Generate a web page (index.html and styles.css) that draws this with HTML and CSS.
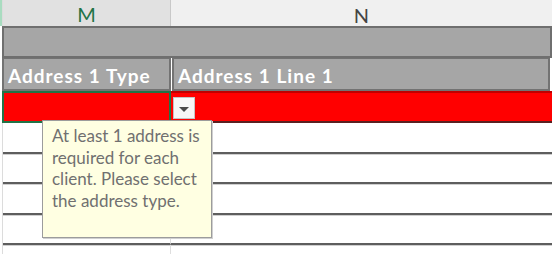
FILE: index.html
```html
<!DOCTYPE html>
<html>
<head>
<meta charset="utf-8">
<link rel="stylesheet" href="styles.css">
</head>
<body>
<div class="sheet">
  <div class="colhdr">
    <div class="edge"></div>
    <div class="ch ch-m">M</div>
    <div class="ch ch-n">N</div>
  </div>
  <div class="row r-title">
    <div class="edge"></div>
    <div class="cell merged"></div>
  </div>
  <div class="row r-head">
    <div class="edge"></div>
    <div class="cell hd hd-m">Address 1 Type</div>
    <div class="cell hd hd-n">Address 1 Line 1</div>
  </div>
  <div class="row r-red">
    <div class="edge"></div>
    <div class="cell red red-m"></div>
    <div class="cell red red-n"></div>
  </div>
  <div class="row r-blank"><div class="edge"></div><div class="cell bl bl-m"></div><div class="cell bl"></div></div>
  <div class="row r-blank"><div class="edge"></div><div class="cell bl bl-m"></div><div class="cell bl"></div></div>
  <div class="row r-blank"><div class="edge"></div><div class="cell bl bl-m"></div><div class="cell bl"></div></div>
  <div class="row r-blank"><div class="edge"></div><div class="cell bl bl-m"></div><div class="cell bl"></div></div>
  <div class="row r-rest"><div class="edge"></div><div class="cell bl-m rest"></div><div class="cell rest"></div></div>

  <div class="dropdown"><span class="tri"></span></div>
  <div class="tooltip">At least 1 address is required for each client. Please select the address type.</div>
</div>
</body>
</html>
```
FILE: styles.css
```css
html, body {
  margin: 0;
  padding: 0;
  background: #ffffff;
}
.sheet {
  position: relative;
  width: 552px;
  height: 254px;
  overflow: hidden;
  font-family: Lato, "Open Sans", sans-serif;
}
.colhdr, .row {
  display: grid;
  grid-template-columns: 3px 168px 381px;
}
.colhdr {
  height: 26px;
}
.colhdr .edge {
  background: #a9dcc0;
}
.ch {
  box-sizing: border-box;
  display: flex;
  align-items: center;
  justify-content: center;
  font-size: 20px;
  padding-top: 2px;
}
.ch-m {
  background: #e1e1e1;
  color: #217346;
  border-bottom: 2px solid #217346;
  border-right: 1px solid #c9c9c9;
}
.ch-n {
  background: #f0f0f0;
  color: #444444;
  border-bottom: 1px solid #d4d4d4;
}
.edge {
  background: #ffffff;
  border-right: 1px solid #dcdcdc;
  box-sizing: border-box;
}
.cell {
  box-sizing: border-box;
}
.r-title {
  height: 32px;
}
.r-title .edge {
  background: #ffffff;
}
.merged {
  grid-column: 2 / 4;
  background: #a6a6a6;
  border: 2px solid #6f6f6f;
  margin-left: -1px;
}
.r-head {
  height: 33px;
}
.hd {
  background: #a6a6a6;
  border: 2px solid #737373;
  border-top-width: 1px;
  color: #ffffff;
  font-weight: bold;
  font-size: 19px;
  letter-spacing: 1px;
  display: flex;
  align-items: center;
  padding-left: 4px;
  padding-top: 2px;
  white-space: nowrap;
  overflow: hidden;
}
.hd-m {
  margin-left: -1px;
}
.hd-n {
  margin-left: 1px;
  margin-right: 2px;
}
.r-red {
  height: 32px;
}
.red {
  background: #ff0000;
}
.red-m {
  border: 2px solid #217346;
  margin-left: -1px;
}
.red-n {
  border-top: 2px solid #c00000;
  border-bottom: 2px solid #5a2020;
}
.r-blank {
  height: 30.5px;
}
.bl {
  border-bottom: 2px solid #5e5e5e;
  box-shadow: 0 1px 0 #cfcfcf;
}
.bl-m {
  border-right: 1px solid #dedede;
}
.r-rest {
  height: 20px;
}
.dropdown {
  position: absolute;
  left: 173px;
  top: 97px;
  width: 22px;
  height: 22px;
  box-sizing: border-box;
  background: #f7f7f7;
  border: 1px solid #c4c4c4;
  display: flex;
  align-items: center;
  justify-content: center;
}
.tri {
  width: 0;
  height: 0;
  border-left: 5px solid transparent;
  border-right: 5px solid transparent;
  border-top: 5px solid #4a4a4a;
  margin-top: 3px;
}
.tooltip {
  position: absolute;
  left: 42px;
  top: 120px;
  width: 170px;
  height: 118px;
  box-sizing: border-box;
  background: #ffffe2;
  border: 1px solid #9c9c9c;
  box-shadow: 1px 1px 0 #d0d0d0;
  color: #707070;
  font-size: 17px;
  line-height: 21.5px;
  padding: 4px 6px 0 9px;
}
```
